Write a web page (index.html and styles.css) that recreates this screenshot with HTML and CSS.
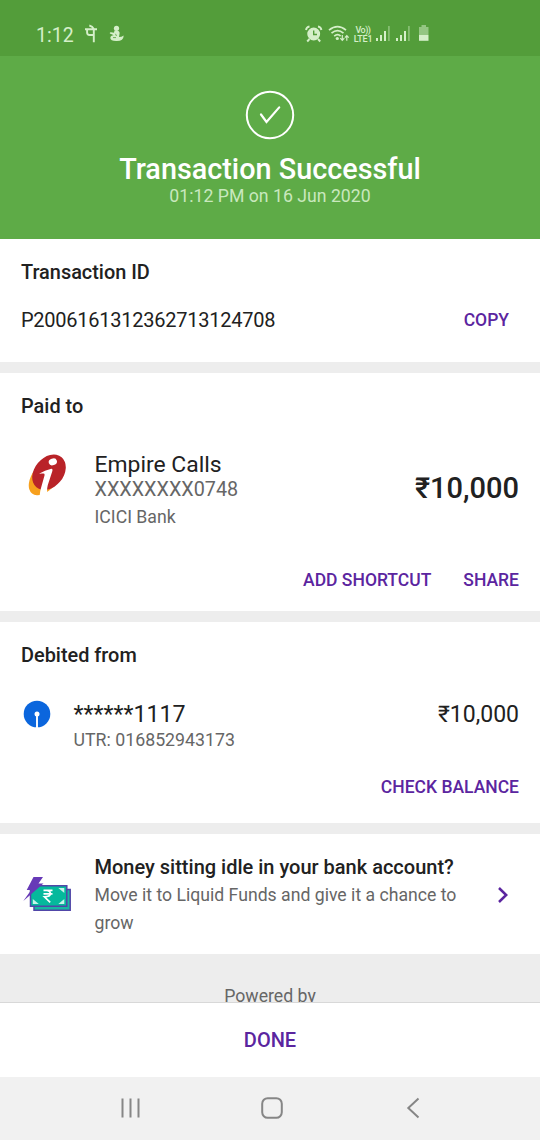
FILE: index.html
```html
<!DOCTYPE html>
<html lang="en">
<head>
<meta charset="utf-8">
<title>Transaction Successful</title>
<link rel="stylesheet" href="styles.css">
</head>
<body>
<div class="screen">
  <header class="status">
    <span class="time">1:12</span>
    <svg class="notif" width="40" height="20" viewBox="0 0 40 20" fill="none" stroke="#d5efc9" stroke-width="1.9">
      <path d="M0 5.3H12M2.1 5.3V8.5Q2.1 11 4.6 11H8.8M8.8 5V18.3M8.8 5Q7.5 2.3 4.3 1.5"/>
      <g stroke="none" fill="#d5efc9"><circle cx="31.5" cy="4.3" r="2.6"/><path d="M29.5 6.5Q35 6 34.6 9.5L34 13Q36.5 13 38.7 11.4Q38.5 17 32 17Q25.5 17.3 25.3 14Q25.5 11.5 28.6 11.3L27.3 10.4L24.8 9.5Q24.5 8.2 26 8.2L29 8.7Z"/></g>
      <path d="M30.5 9.8L31.5 12M28 13.6H31" stroke="#539d3a" stroke-width=".8"/>
    </svg>
    <div class="signals">
      <svg width="18" height="18" viewBox="0 0 18 18" fill="none" stroke="#d5efc9">
        <circle cx="8.7" cy="9" r="5.7" fill="#d5efc9" stroke-width="1.5"/>
        <path d="M8.7 5.4V9.5H12" stroke="#539d3a" stroke-width="1.4"/>
        <path d="M1 5Q1.4 2 4.5 1.5M13 1.5Q16 2 16.4 5M4.5 14L2.2 16.5M13 14L15.2 16.5" stroke-width="1.9"/>
      </svg>
      <svg width="22" height="18" viewBox="0 0 22 18" fill="none" stroke="#d5efc9" stroke-width="1.7">
        <path d="M1 5.2Q9.5 -1.9 18 5.2M3.5 8.2Q9.5 3 15.5 8.2M6.2 11.1Q9.5 8.4 12.6 11"/>
        <circle cx="9.3" cy="13.5" r="1.6" fill="#d5efc9" stroke="none"/>
        <path d="M14.3 10V15.3M12.3 13.2L14.3 15.3L16.3 13.2M18.8 15.8V10.5M16.9 12.6L18.8 10.6L20.7 12.6" stroke-width="1.2"/>
      </svg>
      <span class="volte"><span class="vo">Vo))</span><span>LTE1</span></span>
      <svg class="bars" width="15" height="17" viewBox="0 0 15 17" fill="#d5efc9">
        <path d="M0 13h2v3H0zM4 10h2v6H4zM8 6h2v10H8z"/><path d="M12 1h1.8v15H12z" opacity=".4"/>
      </svg>
      <svg class="bars bars2" width="15" height="17" viewBox="0 0 15 17" fill="#d5efc9">
        <path d="M0 13h2v3H0zM4 10h2v6H4zM8 6h2v10H8z"/><path d="M12 1h1.8v15H12z" opacity=".4"/>
      </svg>
      <svg class="battery" width="12" height="17" viewBox="0 0 12 17" fill="#d5efc9">
        <path d="M3.5 0h4.5v2H10.5v8H1V2h2.5z" opacity=".5"/><path d="M1 10h9.5v5.8H1z"/>
      </svg>
    </div>
  </header>

  <section class="hero">
    <svg width="50" height="50" viewBox="0 0 50 50" fill="none" stroke="#fff" stroke-width="2">
      <circle cx="25" cy="25" r="23.2"/>
      <path d="M16 24.5L21.5 32L34.2 17.4" stroke-width="2.2" stroke-linecap="round"/>
    </svg>
    <h1>Transaction Successful</h1>
    <p>01:12 PM on 16 Jun 2020</p>
  </section>

  <section class="card card-id">
    <h2>Transaction ID</h2>
    <div class="row"><span class="txn">P2006161312362713124708</span><a class="action copy">COPY</a></div>
  </section>

  <section class="card card-paid">
    <h2>Paid to</h2>
    <div class="payee">
      <svg class="bank" width="42" height="44" viewBox="0 0 42 44">
        <ellipse cx="0" cy="0" rx="12.5" ry="21" transform="translate(19 25) rotate(38)" fill="#f7a01d"/>
        <ellipse cx="0" cy="0" rx="14.5" ry="19.6" transform="translate(23 20.3) rotate(40)" fill="#b92328"/>
        <g fill="#fff"><ellipse cx="26.9" cy="9.8" rx="4.2" ry="3.3" transform="rotate(-20 27 10)"/><path d="M13 21.7Q19 18 25.3 16.7Q27 16.8 26.3 19.3L21.8 33Q20.5 38 21.5 44L13.5 45Q14 39 15 36L18.5 23.5Q18.9 21.5 17.5 21.5Q15.5 21.2 13 21.7Z"/></g>
      </svg>
      <div class="details"><div class="name">Empire Calls</div><div class="acct">XXXXXXXX0748</div><div class="bankname">ICICI Bank</div></div>
      <div class="amount big">₹10,000</div>
    </div>
    <div class="actions"><a class="action">ADD SHORTCUT</a><a class="action">SHARE</a></div>
  </section>

  <section class="card card-debit">
    <h2>Debited from</h2>
    <div class="source">
      <svg class="sbi" width="28" height="28" viewBox="0 0 28 28"><circle cx="14" cy="14" r="13.3" fill="#0b66dd"/><circle cx="14" cy="14" r="2.5" fill="#fff"/><path d="M14 14V28" stroke="#fff" stroke-width="1.9"/></svg>
      <div class="details"><div class="masked">******1117</div><div class="utr">UTR: 016852943173</div></div>
      <div class="amount small">₹10,000</div>
    </div>
    <div class="actions"><a class="action">CHECK BALANCE</a></div>
  </section>

  <section class="card promo">
    <svg class="cash" width="50" height="36" viewBox="0 0 50 36">
      <path d="M11 13.5H47.2V34.2H11Z" fill="#16b8a1" stroke="#5146a8" stroke-width="1.5"/>
      <path d="M7.5 9.8H43.8V30.3H7.5Z" fill="#05b99c" stroke="#5146a8" stroke-width="1.5"/>
      <path d="M9.8 28v-5l6 5zM41.3 28v-5l-6 5zM41.3 12v5l-6-5z" fill="#c5f3eb"/>
      <path d="M20.5 14.3H29.5M20.5 17.8H29.5M20.5 14.3H23.5Q27.3 14.3 27.3 17.8Q27.3 20.8 21.5 20.8L27.2 26.3" fill="none" stroke="#fff" stroke-width="1.7"/>
      <path d="M10.5 1H20L15.5 7.5H20.5L.3 25L8.2 14H3.7Z" fill="#6739b7"/>
    </svg>
    <div class="promo-text"><h3>Money sitting idle in your bank account?</h3><p>Move it to Liquid Funds and give it a chance to<br>grow</p></div>
    <svg class="chev" width="12" height="18" viewBox="0 0 12 18" fill="none" stroke="#5b259f" stroke-width="2.5"><path d="M2 2L9.2 9L2 16"/></svg>
  </section>

  <div class="powered"><span>Powered by</span></div>
  <footer class="done"><a>DONE</a></footer>
  <nav class="nav">
    <svg width="22" height="22" viewBox="0 0 22 22" stroke="#868686" stroke-width="2" fill="none"><path d="M2.5 1.5V20.5M10.5 1.5V20.5M18.5 1.5V20.5"/></svg>
    <svg width="22" height="22" viewBox="0 0 22 22" stroke="#868686" stroke-width="2" fill="none"><rect x="1.2" y="1.2" width="19.6" height="19.6" rx="5.5"/></svg>
    <svg width="22" height="22" viewBox="0 0 22 22" stroke="#868686" stroke-width="2" fill="none"><path d="M16.5 1.5L6.3 11L16.5 20.5"/></svg>
  </nav>
</div>
</body>
</html>
```
FILE: styles.css
```css
* { box-sizing: border-box; }
body, h1, h2, h3, p { margin: 0; }
body { font-family: Roboto, "Noto Sans", sans-serif; color: #212121; background: #ededed; }
svg { display: block; flex: none; }
.screen { width: 540px; height: 1140px; display: flex; flex-direction: column; overflow: hidden; white-space: nowrap; }
.status { height: 56px; flex: none; background: #539d3a; color: #d5efc9; display: flex; padding: 24px 0 0 36px; }
.time { width: 49px; font-size: 19.5px; line-height: 23px; }
.signals { display: flex; margin-left: 180px; padding-top: 1px; }
.signals svg + svg { margin-left: 5px; }
.volte { width: 20px; margin: 1px 0 0 3px; display: flex; flex-direction: column; font-size: 9px; line-height: 9px; font-weight: 500; align-items: center; letter-spacing: -.2px; }
.vo { letter-spacing: -.5px; }
.signals .bars { margin-left: 3px; }
.signals .bars2 { margin-left: 5px; }
.signals .battery { margin-left: 7px; }
.hero { height: 183px; flex: none; background: #5eab47; color: #fff; display: flex; flex-direction: column; align-items: center; padding-top: 34px; }
.hero h1 { font-size: 28.8px; line-height: 34px; margin-top: 12px; font-weight: 500; }
.hero p { font-size: 17.7px; line-height: 20px; color: #c9e8be; }
.card { background: #fff; flex: none; margin-bottom: 11px; padding: 22px 21px 0; }
h2 { font-size: 19.9px; line-height: 24px; font-weight: 500; }
.action { color: #5b259f; font-size: 17.5px; line-height: 22px; font-weight: 500; }
.row { display: flex; justify-content: space-between; margin-top: 23px; line-height: 24px; }
.card-id { height: 123px; }
.txn { font-size: 20px; letter-spacing: -.25px; }
.copy { margin-right: 10px; line-height: 24px; }
.card-paid { height: 238px; }
.payee { display: flex; margin-top: 33px; height: 80px; }
.bank { margin-left: 5px; }
.payee .details { margin-left: 26.5px; }
.name { font-size: 22.9px; line-height: 26px; }
.acct { font-size: 19.8px; line-height: 24px; color: #666; }
.bankname { font-size: 17.7px; line-height: 22px; margin-top: 4px; color: #666; }
.amount { margin-left: auto; font-size: 23px; line-height: 26px; }
.big { font-size: 29px; line-height: 34px; font-weight: 500; margin-top: 19px; }
.small { margin-top: 1px; }
.actions { display: flex; justify-content: flex-end; gap: 32px; }
.card-paid .actions { margin-top: 37px; }
.card-debit { height: 201px; }
.source { display: flex; margin-top: 33px; height: 54px; }
.sbi { margin: -1px 0 0 2px; }
.source .details { margin-left: 22.5px; }
.masked { font-size: 23.2px; line-height: 26px; }
.utr { font-size: 17.75px; line-height: 22px; margin-top: 2px; color: #666; }
.card-debit .actions { margin-top: 21px; }
.promo { height: 120px; display: flex; margin-bottom: 0; padding-top: 21px; }
.cash { margin: 21px 0 0 2px; }
.promo-text { margin-left: 21.5px; }
h3 { font-size: 20px; line-height: 24px; font-weight: 500; }
.promo-text p { font-size: 17.65px; line-height: 28px; color: #666; margin-top: 2px; }
.chev { margin: 31px 10px 0 auto; }
.powered { height: 49px; flex: none; overflow: hidden; text-align: center; font-size: 17.7px; line-height: 22px; padding-top: 31px; color: #666; border-bottom: 1px solid #d8d8d8; }
.done { height: 74px; flex: none; background: #fff; color: #5b259f; text-align: center; font-size: 20px; font-weight: 500; line-height: 74px; }
.nav { height: 63px; flex: none; background: #f1f1f1; display: flex; justify-content: space-between; align-items: center; padding: 0 116px 2px 120px; }
```
